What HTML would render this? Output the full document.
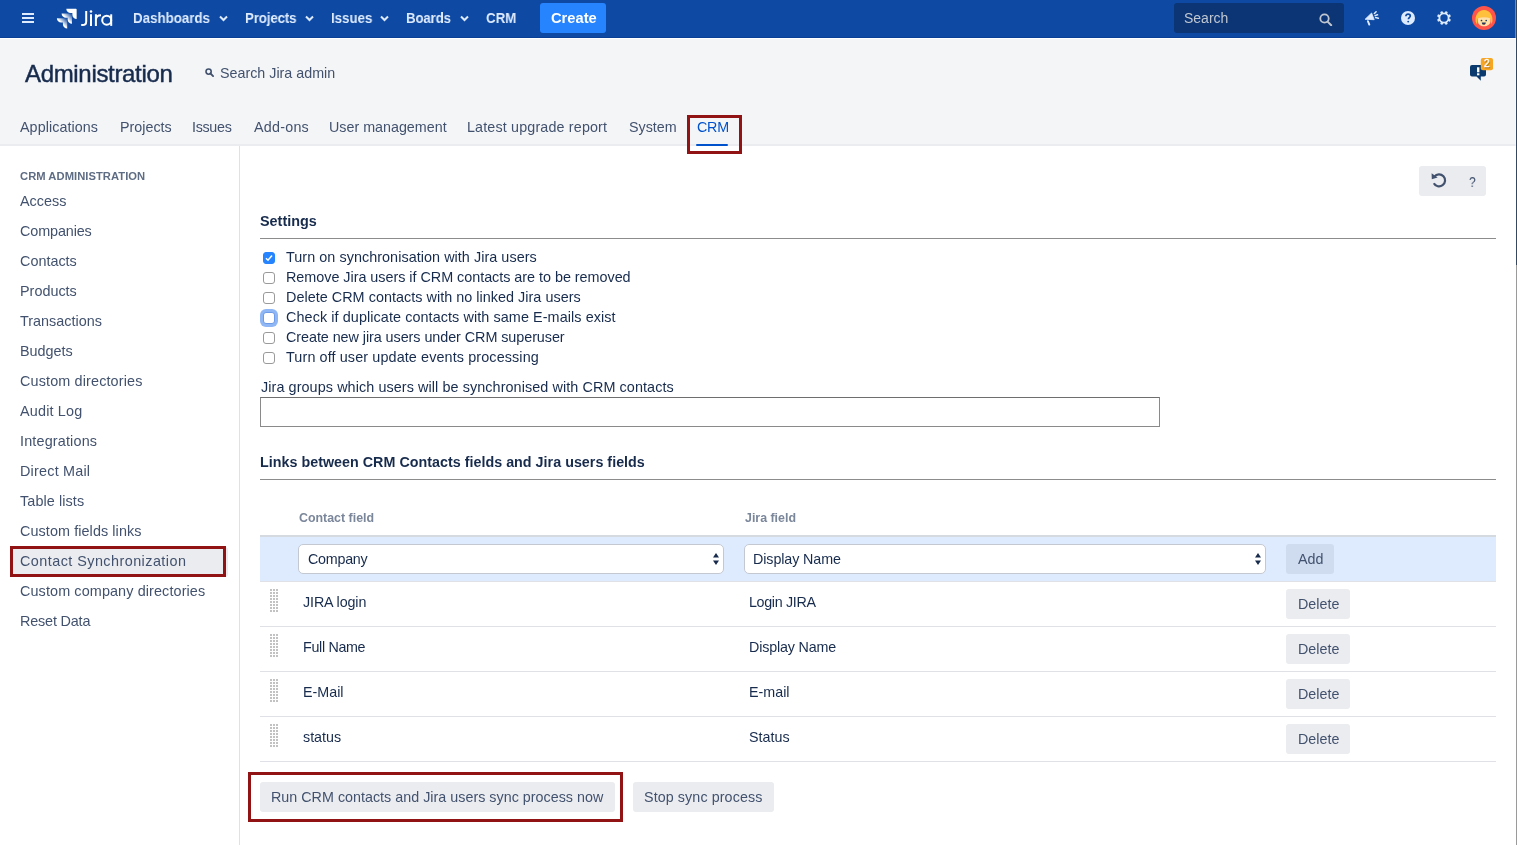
<!DOCTYPE html>
<html><head><meta charset="utf-8">
<style>
*{box-sizing:border-box;margin:0;padding:0}
html,body{width:1517px;height:845px;overflow:hidden;background:#fff}
body{position:relative;font-family:"Liberation Sans",sans-serif;color:#172b4d}
.a{position:absolute}
.t{position:absolute;white-space:nowrap;line-height:1;will-change:transform}
#hdr{left:0;top:0;width:1517px;height:38px;background:#0e4aa3;border-bottom:1px solid #0a3f96}
#hdr .n{color:#deebff;font-weight:bold;font-size:14.8px;top:10.6px;transform:scaleX(0.9);transform-origin:0 0}
#adm{left:0;top:38px;width:1517px;height:108px;background:#f4f5f7;border-top:1px solid #fff;border-bottom:2px solid #ebecf0}
.tab{color:#42526e;font-size:14.3px;top:120.1px}
#side{left:239px;top:146px;width:1px;height:699px;background:#dfe1e6}
.si{color:#42526e;font-size:14.4px;left:20px}
.lbl{font-size:14.4px;color:#172b4d;left:286px}
.cb{position:absolute;left:263px;width:12px;height:12px;border:1px solid #9a9a9a;border-radius:3px;background:#fff}
.btn{position:absolute;background:#ebecf0;border-radius:3px}
.btxt{color:#42526e;font-size:14.3px}
.rowb{position:absolute;left:260px;width:1236px;height:1px;background:#dfe1e6}
.drag{position:absolute;left:270px;width:8px;height:23px;background:linear-gradient(90deg,transparent 2px,#fff 2px) 0 0/3px 3px,linear-gradient(transparent 2px,#fff 2px) 0 0/3px 3px,#c2c2c2}
.redbox{position:absolute;border:3px solid #921313}
</style></head><body>

<!-- top header -->
<div id="hdr" class="a">
  <svg class="a" style="left:22px;top:13px" width="12" height="10" viewBox="0 0 12 10"><rect x="0" y="0" width="12" height="2" fill="#deebff"/><rect x="0" y="4" width="12" height="2" fill="#deebff"/><rect x="0" y="8" width="12" height="2" fill="#deebff"/></svg>
  <svg class="a" style="left:56px;top:8px" width="21" height="21" viewBox="2 1 27 27">
    <defs><linearGradient id="g1" x1="0.95" y1="0.05" x2="0.35" y2="0.65"><stop offset="0.1" stop-color="#fff" stop-opacity="0.15"/><stop offset="0.75" stop-color="#fff"/></linearGradient></defs>
    <path fill="#fff" d="M27.5,2H15.26a5.52,5.52,0,0,0,5.52,5.52h2.25v2.18a5.52,5.52,0,0,0,5.52,5.51V3A1,1,0,0,0,27.5,2Z"/>
    <path fill="url(#g1)" d="M21.44,8.1H9.2a5.52,5.52,0,0,0,5.52,5.52H17v2.18a5.52,5.52,0,0,0,5.52,5.51V9.1A1,1,0,0,0,21.44,8.1Z"/>
    <path fill="url(#g1)" d="M15.38,14.2H3.14a5.52,5.52,0,0,0,5.52,5.52h2.25v2.18A5.52,5.52,0,0,0,16.44,27.41V15.2A1,1,0,0,0,15.38,14.2Z"/>
  </svg>
  <svg class="a" style="left:76px;top:6px" width="40" height="24" viewBox="76 6 40 24"><g stroke="#fff" fill="none" stroke-width="2"><path d="M86.2 11V21.4Q86.2 25 82.6 25H81.2"/><path d="M91 14.3V25.9"/><path d="M95.9 14.3V25.9M95.9 19.5Q96.2 15.2 101 15.2"/><circle cx="106.7" cy="20.2" r="4.5"/><path d="M111.2 14.3V25.9"/></g><circle cx="91" cy="11.5" r="1.3" fill="#fff"/></svg>
  <div class="t n" style="left:133px">Dashboards</div>
  <svg class="a" style="left:219px;top:15px" width="9" height="7" viewBox="0 0 9 7"><path d="M1 1.5l3.5 3.5 3.5-3.5" stroke="#deebff" stroke-width="2" fill="none"/></svg>
  <div class="t n" style="left:245px;letter-spacing:-0.159px">Projects</div>
  <svg class="a" style="left:305px;top:15px" width="9" height="7" viewBox="0 0 9 7"><path d="M1 1.5l3.5 3.5 3.5-3.5" stroke="#deebff" stroke-width="2" fill="none"/></svg>
  <div class="t n" style="left:331px">Issues</div>
  <svg class="a" style="left:380px;top:15px" width="9" height="7" viewBox="0 0 9 7"><path d="M1 1.5l3.5 3.5 3.5-3.5" stroke="#deebff" stroke-width="2" fill="none"/></svg>
  <div class="t n" style="left:406px;letter-spacing:-0.200px">Boards</div>
  <svg class="a" style="left:460px;top:15px" width="9" height="7" viewBox="0 0 9 7"><path d="M1 1.5l3.5 3.5 3.5-3.5" stroke="#deebff" stroke-width="2" fill="none"/></svg>
  <div class="t n" style="left:485.7px">CRM</div>
  <div class="a" style="left:540px;top:3px;width:66px;height:30px;background:#2684ff;border-radius:3px"></div>
  <div class="t" style="left:550.8px;top:11px;font-size:14.7px;font-weight:bold;color:#fff">Create</div>
  <!-- search -->
  <div class="a" style="left:1174px;top:3px;width:170px;height:30px;background:#0b3574;border-radius:3px"></div>
  <div class="t" style="left:1184px;top:11.3px;font-size:14px;color:#c1c7d0">Search</div>
  <svg class="a" style="left:1319px;top:13px" width="14" height="13" viewBox="0 0 14 13"><circle cx="5.5" cy="5.5" r="4.2" stroke="#c1c7d0" stroke-width="1.8" fill="none"/><path d="M8.6 8.6l3.6 3.6" stroke="#c1c7d0" stroke-width="2" stroke-linecap="round"/></svg>
  <!-- megaphone -->
  <svg class="a" style="left:1364px;top:11px" width="16" height="15" viewBox="0 0 16 15"><path d="M1.1 8.3L7.6 2 10.2 8.7z" fill="#deebff" stroke="#deebff" stroke-width="0.8" stroke-linejoin="round"/><path d="M3.9 10.2L5.3 13.6" stroke="#deebff" stroke-width="1.9" stroke-linecap="round"/><path d="M10.4 2.5L12.1 0.8M11.1 4.6L13.5 3.8M11.6 6.6L14.4 7.2" stroke="#deebff" stroke-width="1.5" stroke-linecap="round"/></svg>
  <!-- help -->
  <svg class="a" style="left:1401px;top:11px" width="14" height="14" viewBox="0 0 14 14"><circle cx="7" cy="7" r="7" fill="#deebff"/><path d="M4.9 5.2c0-1.3 1-2.1 2.2-2.1s2.2.8 2.2 2c0 1.5-1.9 1.6-1.9 3.1" stroke="#0e4aa3" stroke-width="1.7" fill="none"/><circle cx="7.2" cy="10.6" r="0.95" fill="#0e4aa3"/></svg>
  <!-- gear -->
  <svg class="a" style="left:1437px;top:11px" width="14" height="14" viewBox="0 0 14 14"><g fill="#deebff" transform="rotate(22.5 7 7)"><circle cx="7" cy="7" r="5.5"/><rect x="5.7" y="0" width="2.6" height="14" rx="0.7"/><rect x="0" y="5.7" width="14" height="2.6" rx="0.7"/><rect x="5.7" y="0" width="2.6" height="14" rx="0.7" transform="rotate(45 7 7)"/><rect x="5.7" y="0" width="2.6" height="14" rx="0.7" transform="rotate(-45 7 7)"/></g><circle cx="7" cy="7" r="3.7" fill="#0e4aa3"/></svg>
  <!-- avatar -->
  <svg class="a" style="left:1472px;top:6px" width="24" height="24" viewBox="0 0 24 24"><circle cx="12" cy="12" r="12" fill="#ff5449"/><path d="M3.6 15.5C2.8 9.5 6.3 4 12 4s9.2 5.5 8.4 11.5L19 18.5 18.3 12.5Q12 10.8 5.8 12.5L5 18.5z" fill="#ffc13b"/><path d="M6 12.3Q12 10 18.3 12.3V15.2C18.3 18.5 15.5 20.3 12 20.3S6 18.5 6 15.2z" fill="#ffe1a8"/><circle cx="9.5" cy="14.5" r="0.85" fill="#253858"/><circle cx="14.2" cy="14.5" r="0.85" fill="#253858"/><path d="M9.8 16.6H13.8C13.8 18.1 12.9 19.1 11.8 19.1S9.8 18.1 9.8 16.6z" fill="#253858"/><path d="M10.5 18.3H13.1C12.8 18.8 12.3 19.1 11.8 19.1S10.8 18.8 10.5 18.3z" fill="#ff5449"/></svg>
</div>

<!-- admin header -->
<div id="adm" class="a"></div>
<div class="t" style="left:25px;top:61.9px;font-size:24px;color:#172b4d;-webkit-text-stroke:0.45px #172b4d;letter-spacing:-0.327px">Administration</div>
<svg class="a" style="left:205px;top:68px" width="9" height="9" viewBox="0 0 9 9"><circle cx="3.6" cy="3.6" r="2.6" stroke="#42526e" stroke-width="1.6" fill="none"/><path d="M5.5 5.5l2.6 2.6" stroke="#42526e" stroke-width="1.8" stroke-linecap="round"/></svg>
<div class="t" style="left:219.5px;top:65.7px;font-size:14.3px;color:#42526e">Search Jira admin</div>
<!-- notifications -->
<svg class="a" style="left:1469px;top:57px" width="25" height="25" viewBox="0 0 25 25"><path d="M3 8h12a2 2 0 0 1 2 2v7.5a2 2 0 0 1-2 2H11.8l0 4.3-4.3-4.3H3a2 2 0 0 1-2-2V10a2 2 0 0 1 2-2z" fill="#0a3a6e"/><rect x="8" y="10.3" width="2.4" height="5" fill="#fff"/><rect x="8" y="16.3" width="2.4" height="2" fill="#fff"/><rect x="11.8" y="1" width="12.2" height="12.2" rx="2" fill="#f6a623" stroke="#f4f5f7" stroke-width="0"/><text x="18.3" y="10.5" font-family="Liberation Sans" font-size="10.2" fill="#b06a10" stroke="#b06a10" stroke-width="0.35" text-anchor="middle">2</text><text x="17.9" y="10.1" font-family="Liberation Sans" font-size="10.2" fill="#fff" stroke="#fff" stroke-width="0.35" text-anchor="middle">2</text></svg>

<!-- tabs -->
<div class="t tab" style="left:20.4px;letter-spacing:0.082px">Applications</div>
<div class="t tab" style="left:120px">Projects</div>
<div class="t tab" style="left:192.3px;letter-spacing:-0.300px">Issues</div>
<div class="t tab" style="left:253.6px;letter-spacing:0.25px">Add-ons</div>
<div class="t tab" style="left:329.4px">User management</div>
<div class="t tab" style="left:467.4px;letter-spacing:0.165px">Latest upgrade report</div>
<div class="t tab" style="left:629px">System</div>
<div class="t tab" style="left:696.6px;color:#0052cc;letter-spacing:-0.2px">CRM</div>
<div class="a" style="left:696px;top:144px;width:32px;height:2px;background:#0052cc;border-radius:1px"></div>
<div class="redbox" style="left:687px;top:115px;width:55px;height:39px"></div>

<!-- sidebar -->
<div id="side" class="a"></div>
<div class="t" style="left:20.4px;top:170.8px;font-size:11.2px;font-weight:bold;color:#5e6c84;letter-spacing:0.05px">CRM ADMINISTRATION</div>
<div class="t si" style="top:193.8px">Access</div>
<div class="t si" style="top:223.8px;letter-spacing:-0.125px">Companies</div>
<div class="t si" style="top:253.8px">Contacts</div>
<div class="t si" style="top:283.8px">Products</div>
<div class="t si" style="top:313.8px">Transactions</div>
<div class="t si" style="top:343.8px">Budgets</div>
<div class="t si" style="top:373.8px;letter-spacing:0.141px">Custom directories</div>
<div class="t si" style="top:403.8px;letter-spacing:0.175px">Audit Log</div>
<div class="t si" style="top:433.8px;letter-spacing:0.164px">Integrations</div>
<div class="t si" style="top:463.8px;letter-spacing:0.210px">Direct Mail</div>
<div class="t si" style="top:493.8px;letter-spacing:0.090px">Table lists</div>
<div class="t si" style="top:523.8px;letter-spacing:0.083px">Custom fields links</div>
<div class="a" style="left:10px;top:547px;width:218px;height:30px;background:#ebecf0;border-radius:3px"></div>
<div class="t si" style="top:553.8px;letter-spacing:0.45px">Contact Synchronization</div>
<div class="redbox" style="left:10px;top:546px;width:216px;height:31px"></div>
<div class="t si" style="top:583.8px;letter-spacing:0.112px">Custom company directories</div>
<div class="t si" style="top:613.8px;letter-spacing:-0.178px">Reset Data</div>

<!-- main -->
<div class="btn" style="left:1419px;top:166px;width:67px;height:30px"></div>
<svg class="a" style="left:1431px;top:172px" width="16" height="17" viewBox="0 0 16 17"><path d="M2.8 11.2A6 6 0 1 0 3.4 4.6" stroke="#42526e" stroke-width="2.2" fill="none"/><path d="M0.6 1.3L0.8 7.3 6.6 5.4z" fill="#42526e"/></svg>
<div class="t" style="left:1468.6px;top:174.5px;font-size:14.2px;color:#42526e;transform:scaleX(0.85);transform-origin:0 0">?</div>

<div class="t" style="left:260.4px;top:213.9px;font-size:14.4px;font-weight:bold;color:#172b4d">Settings</div>
<div class="a" style="left:260px;top:238px;width:1236px;height:1px;background:#8c8c8c"></div>

<div class="cb" style="top:252px;background:#2684ff;border-color:#2684ff"><svg class="a" style="left:1px;top:1px" width="8" height="8" viewBox="0 0 8 8"><path d="M1 4.2l2 2L7 1.6" stroke="#fff" stroke-width="1.5" fill="none"/></svg></div>
<div class="t lbl" style="top:250px;letter-spacing:0.045px">Turn on synchronisation with Jira users</div>
<div class="cb" style="top:272px"></div>
<div class="t lbl" style="top:270px;letter-spacing:-0.034px">Remove Jira users if CRM contacts are to be removed</div>
<div class="cb" style="top:292px"></div>
<div class="t lbl" style="top:290px;letter-spacing:0.027px">Delete CRM contacts with no linked Jira users</div>
<div class="a" style="left:260px;top:309px;width:18px;height:18px;border-radius:6px;background:#8fb6f5"></div>
<div class="cb" style="top:312px;border-color:#6d9be6"></div>
<div class="t lbl" style="top:310px;letter-spacing:0.082px">Check if duplicate contacts with same E-mails exist</div>
<div class="cb" style="top:332px"></div>
<div class="t lbl" style="top:330px;letter-spacing:-0.072px">Create new jira users under CRM superuser</div>
<div class="cb" style="top:352px"></div>
<div class="t lbl" style="top:350px;letter-spacing:0.108px">Turn off user update events processing</div>

<div class="t" style="left:260.6px;top:379.6px;font-size:14.4px;color:#172b4d;letter-spacing:0.079px">Jira groups which users will be synchronised with CRM contacts</div>
<div class="a" style="left:260px;top:397px;width:900px;height:30px;border:1px solid #8a8a8a;border-top-color:#6e6e6e;background:#fff"></div>

<div class="t" style="left:260.4px;top:454.8px;font-size:14.3px;font-weight:bold;color:#172b4d;letter-spacing:0.020px">Links between CRM Contacts fields and Jira users fields</div>
<div class="a" style="left:260px;top:479px;width:1236px;height:1px;background:#8c8c8c"></div>

<div class="t" style="left:298.6px;top:511.9px;font-size:12.4px;font-weight:bold;color:#7a869a">Contact field</div>
<div class="t" style="left:744.6px;top:511.9px;font-size:12.4px;font-weight:bold;color:#7a869a">Jira field</div>

<div class="a" style="left:260px;top:535px;width:1236px;height:46px;background:#deebff;border-top:2px solid #d5d9e0"></div>
<div class="a" style="left:298px;top:544px;width:426px;height:30px;background:#fff;border:1px solid #c4c9d1;border-radius:5px"></div>
<div class="t" style="left:307.5px;top:551.9px;font-size:14.3px;color:#172b4d;letter-spacing:-0.250px">Company</div>
<svg class="a" style="left:712px;top:552px" width="8" height="14" viewBox="0 0 8 14"><path d="M1 5.5L4 1l3 4.5zM1 8.5L4 13l3-4.5z" fill="#172b4d"/></svg>
<div class="a" style="left:744px;top:544px;width:522px;height:30px;background:#fff;border:1px solid #c4c9d1;border-radius:5px"></div>
<div class="t" style="left:753.4px;top:551.9px;font-size:14.3px;color:#172b4d;letter-spacing:-0.091px">Display Name</div>
<svg class="a" style="left:1254px;top:552px" width="8" height="14" viewBox="0 0 8 14"><path d="M1 5.5L4 1l3 4.5zM1 8.5L4 13l3-4.5z" fill="#172b4d"/></svg>
<div class="btn" style="left:1286px;top:544px;width:48px;height:30px;background:#cfdcef"></div>
<div class="t btxt" style="left:1297.6px;top:551.9px">Add</div>
<div class="rowb" style="top:581px"></div>

<div class="drag" style="top:589px"></div>
<div class="t" style="left:302.6px;top:595.1px;font-size:14.3px;color:#172b4d;letter-spacing:-0.111px">JIRA login</div>
<div class="t" style="left:748.8px;top:595.1px;font-size:14.3px;color:#172b4d;letter-spacing:-0.333px">Login JIRA</div>
<div class="btn" style="left:1286px;top:589px;width:64px;height:30px"></div>
<div class="t btxt" style="left:1297.6px;top:597px">Delete</div>
<div class="rowb" style="top:626px"></div>

<div class="drag" style="top:634px"></div>
<div class="t" style="left:302.6px;top:640.1px;font-size:14.3px;color:#172b4d;letter-spacing:-0.325px">Full Name</div>
<div class="t" style="left:748.8px;top:640.1px;font-size:14.3px;color:#172b4d;letter-spacing:-0.155px">Display Name</div>
<div class="btn" style="left:1286px;top:634px;width:64px;height:30px"></div>
<div class="t btxt" style="left:1297.6px;top:642px">Delete</div>
<div class="rowb" style="top:671px"></div>

<div class="drag" style="top:679px"></div>
<div class="t" style="left:302.6px;top:685.1px;font-size:14.3px;color:#172b4d">E-Mail</div>
<div class="t" style="left:748.8px;top:685.1px;font-size:14.3px;color:#172b4d">E-mail</div>
<div class="btn" style="left:1286px;top:679px;width:64px;height:30px"></div>
<div class="t btxt" style="left:1297.6px;top:687px">Delete</div>
<div class="rowb" style="top:716px"></div>

<div class="drag" style="top:724px"></div>
<div class="t" style="left:302.6px;top:730.1px;font-size:14.3px;color:#172b4d">status</div>
<div class="t" style="left:748.8px;top:730.1px;font-size:14.3px;color:#172b4d">Status</div>
<div class="btn" style="left:1286px;top:724px;width:64px;height:30px"></div>
<div class="t btxt" style="left:1297.6px;top:732px">Delete</div>
<div class="rowb" style="top:761px"></div>

<div class="btn" style="left:260px;top:782px;width:355px;height:30px"></div>
<div class="t btxt" style="left:271.3px;top:789.9px;letter-spacing:0.019px">Run CRM contacts and Jira users sync process now</div>
<div class="redbox" style="left:248px;top:772px;width:375px;height:50px"></div>
<div class="btn" style="left:633px;top:782px;width:141px;height:30px"></div>
<div class="t btxt" style="left:644.3px;top:789.9px;letter-spacing:0.094px">Stop sync process</div>

<!-- right edge -->
<div class="a" style="left:1515px;top:0;width:1px;height:845px;background:rgba(255,255,255,0.35)"></div>
<div class="a" style="left:1516px;top:0;width:1px;height:265px;background:#344862"></div>
<div class="a" style="left:1516px;top:265px;width:1px;height:580px;background:#9a9a9a"></div>
</body></html>
